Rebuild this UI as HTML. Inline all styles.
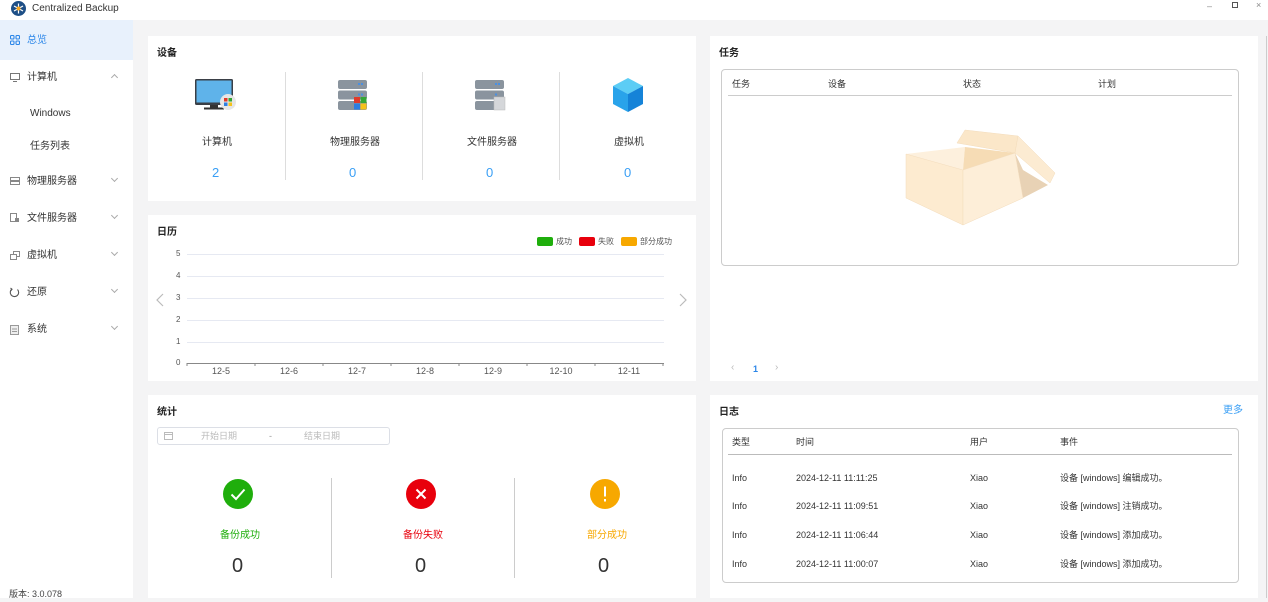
<!DOCTYPE html>
<html><head><meta charset="utf-8"><style>
*{margin:0;padding:0;box-sizing:border-box}
body{width:1268px;height:598px;overflow:hidden;background:#f4f4f5;font-family:"Liberation Sans","Noto Sans CJK SC",sans-serif;color:#333;position:relative;font-size:10px}
.a{position:absolute;white-space:nowrap;line-height:16px}
.card{position:absolute;background:#fff}
.t{font-weight:bold;font-size:10px;color:#222}
.side{position:absolute;left:0;top:20px;width:133px;height:578px;background:#fff}
.chev{position:absolute;left:112px;width:5px;height:5px;border-right:1px solid #aaa;border-bottom:1px solid #aaa}
.g{position:absolute;left:187px;width:477px;height:1px;background:#e6e9f2}
.yl{position:absolute;left:176px;font-size:8px;color:#555}
.xl{position:absolute;font-size:9px;color:#555;width:60px;text-align:center}
.vd{position:absolute;width:1px;background:#ddd}
</style></head><body>
<div class="a" style="left:0;top:0;width:1268px;height:20px;background:#fff"></div>
<svg class="a" style="left:11px;top:1px" width="15" height="15" viewBox="0 0 15 15"><circle cx="7.5" cy="7.5" r="7.5" fill="#1e4f86"/><g stroke="#fff" stroke-width="1.2"><line x1="7.5" y1="2.5" x2="7.5" y2="12.5"/><line x1="3" y1="5" x2="12" y2="10"/><line x1="3" y1="10" x2="12" y2="5"/></g><circle cx="7.5" cy="7.5" r="2" fill="#f5a623"/></svg>
<div class="a" style="left:32px;top:1px;font-size:10px;color:#333">Centralized Backup</div>
<div class="a" style="left:1207px;top:-2px;font-size:9px;color:#888">–</div>
<div class="a" style="left:1232px;top:2px;width:6px;height:6px;border:1px solid #555"></div>
<div class="a" style="left:1256px;top:-3px;font-size:9px;color:#888">×</div>
<div class="side"></div>
<div class="a" style="left:0;top:20px;width:133px;height:40px;background:#e8f1fc"></div>
<svg class="a" style="left:10px;top:35px" width="10" height="10" viewBox="0 0 10 10" fill="none" stroke="#2b86e8" stroke-width="1.1"><rect x=".5" y=".5" width="3.5" height="3.5" rx="1"/><rect x="6" y=".5" width="3.5" height="3.5" rx="1"/><rect x=".5" y="6" width="3.5" height="3.5" rx="1"/><rect x="6" y="6" width="3.5" height="3.5" rx="1"/></svg>
<div class="a" style="left:27px;top:33px;color:#2b86e8">总览</div>
<svg class="a" style="left:10px;top:73px" width="10" height="9" viewBox="0 0 10 9" fill="none" stroke="#777"><rect x=".5" y=".5" width="9" height="6"/><line x1="3" y1="8.5" x2="7" y2="8.5"/></svg>
<div class="a" style="left:27px;top:70px">计算机</div>
<div class="chev" style="top:75px;transform:rotate(-135deg)"></div>
<div class="a" style="left:30px;top:106px">Windows</div>
<div class="a" style="left:30px;top:139px">任务列表</div>
<svg class="a" style="left:10px;top:177px" width="10" height="8"><rect x=".5" y=".5" width="9" height="7" fill="none" stroke="#888"/><rect x="1" y="3" width="8" height="2" fill="#888"/></svg>
<div class="a" style="left:27px;top:174px">物理服务器</div>
<div class="chev" style="top:176px;transform:rotate(45deg)"></div>
<svg class="a" style="left:10px;top:213px" width="10" height="10"><rect x=".5" y=".5" width="6" height="8" fill="none" stroke="#888"/><rect x="5" y="5" width="4" height="4" fill="#888"/></svg>
<div class="a" style="left:27px;top:211px">文件服务器</div>
<div class="chev" style="top:213px;transform:rotate(45deg)"></div>
<svg class="a" style="left:10px;top:251px" width="10" height="9" fill="none" stroke="#888"><rect x="3.5" y=".5" width="6" height="5"/><rect x=".5" y="3.5" width="6" height="5" fill="#fff"/></svg>
<div class="a" style="left:27px;top:248px">虚拟机</div>
<div class="chev" style="top:250px;transform:rotate(45deg)"></div>
<svg class="a" style="left:9px;top:287px" width="11" height="11" fill="none" stroke="#555" stroke-width="1.1"><path d="M3 2 A4.2 4.2 0 1 0 8.5 2.5"/><path d="M1.5 1 L3 2.2 L1.8 3.8"/></svg>
<div class="a" style="left:27px;top:285px">还原</div>
<div class="chev" style="top:287px;transform:rotate(45deg)"></div>
<svg class="a" style="left:10px;top:325px" width="9" height="10"><rect x=".5" y=".5" width="8" height="9" fill="#eee" stroke="#999"/><line x1="2" y1="4" x2="7" y2="4" stroke="#999"/><line x1="2" y1="6.5" x2="7" y2="6.5" stroke="#999"/></svg>
<div class="a" style="left:27px;top:322px">系统</div>
<div class="chev" style="top:324px;transform:rotate(45deg)"></div>
<div class="a" style="left:9px;top:586px;font-size:9px;color:#444">版本: 3.0.078</div>
<div class="a" style="left:1266px;top:36px;width:1px;height:562px;background:#ccc"></div>

<div class="card" style="left:148px;top:36px;width:548px;height:165px"></div>
<div class="a t" style="left:157px;top:46px">设备</div>
<div class="vd" style="left:285px;top:72px;height:108px"></div>
<div class="vd" style="left:422px;top:72px;height:108px"></div>
<div class="vd" style="left:559px;top:72px;height:108px"></div>
<svg class="a" style="left:194px;top:78px" width="44" height="34" viewBox="0 0 44 34"><rect x="1" y="1" width="38" height="26" rx="1.5" fill="#3a3f46"/><rect x="2.5" y="2.5" width="35" height="22" fill="#5fb3ea"/><rect x="16" y="27" width="8" height="3" fill="#333"/><rect x="10" y="29.5" width="20" height="2" fill="#333"/><circle cx="34" cy="24" r="8" fill="#e6e6e6"/><rect x="30" y="20" width="3.5" height="3.5" fill="#e03a2a"/><rect x="34.5" y="20" width="3.5" height="3.5" fill="#35a635"/><rect x="30" y="24.5" width="3.5" height="3.5" fill="#2d7de0"/><rect x="34.5" y="24.5" width="3.5" height="3.5" fill="#f5c21b"/></svg>
<svg class="a" style="left:336px;top:78px" width="34" height="34" viewBox="0 0 34 34"><g fill="#8a949e"><rect x="2" y="2" width="29" height="9" rx="2"/><rect x="2" y="12.5" width="29" height="9" rx="2"/><rect x="2" y="23" width="29" height="9" rx="2"/></g><g fill="#4a90e2"><rect x="22" y="5" width="2" height="2"/><rect x="25" y="5" width="2" height="2"/><rect x="22" y="15.5" width="2" height="2"/><rect x="25" y="15.5" width="2" height="2"/></g><rect x="18" y="19" width="6" height="6" fill="#e03a2a"/><rect x="24.5" y="19" width="6" height="6" fill="#35a635"/><rect x="18" y="25.5" width="6" height="6" fill="#2d7de0"/><rect x="24.5" y="25.5" width="6" height="6" fill="#f5c21b"/></svg>
<svg class="a" style="left:473px;top:78px" width="34" height="34" viewBox="0 0 34 34"><g fill="#8a949e"><rect x="2" y="2" width="29" height="9" rx="2"/><rect x="2" y="12.5" width="29" height="9" rx="2"/><rect x="2" y="23" width="29" height="9" rx="2"/></g><g fill="#4a90e2"><rect x="22" y="5" width="2" height="2"/><rect x="25" y="5" width="2" height="2"/><rect x="22" y="15.5" width="2" height="2"/></g><rect x="21" y="19" width="11" height="13" fill="#d5d7da" stroke="#bbb" stroke-width=".5"/></svg>
<svg class="a" style="left:611px;top:77px" width="34" height="36" viewBox="0 0 34 36"><polygon points="17,1 32,9 17,17 2,9" fill="#5ccdf5"/><polygon points="2,9 17,17 17,35 2,27" fill="#29a3ea"/><polygon points="32,9 17,17 17,35 32,27" fill="#1583d8"/></svg>
<div class="a" style="left:202px;top:135px">计算机</div>
<div class="a" style="left:330px;top:135px">物理服务器</div>
<div class="a" style="left:467px;top:135px">文件服务器</div>
<div class="a" style="left:614px;top:135px">虚拟机</div>
<div class="a" style="left:212px;top:165px;font-size:13px;line-height:15px;color:#3a9ff5">2</div>
<div class="a" style="left:349px;top:165px;font-size:13px;line-height:15px;color:#3a9ff5">0</div>
<div class="a" style="left:486px;top:165px;font-size:13px;line-height:15px;color:#3a9ff5">0</div>
<div class="a" style="left:624px;top:165px;font-size:13px;line-height:15px;color:#3a9ff5">0</div>

<div class="card" style="left:148px;top:215px;width:548px;height:166px"></div>
<div class="a t" style="left:157px;top:225px">日历</div>
<div class="a" style="left:537px;top:237px;width:16px;height:9px;background:#1fae0c;border-radius:2px"></div>
<div class="a" style="left:556px;top:234px;font-size:8px;color:#555">成功</div>
<div class="a" style="left:579px;top:237px;width:16px;height:9px;background:#e8000c;border-radius:2px"></div>
<div class="a" style="left:598px;top:234px;font-size:8px;color:#555">失败</div>
<div class="a" style="left:621px;top:237px;width:16px;height:9px;background:#f7a800;border-radius:2px"></div>
<div class="a" style="left:640px;top:234px;font-size:8px;color:#555">部分成功</div>
<div class="g" style="top:254px"></div><div class="g" style="top:276px"></div><div class="g" style="top:298px"></div><div class="g" style="top:320px"></div><div class="g" style="top:342px"></div>
<div class="a" style="left:187px;top:363px;width:477px;height:1px;background:#888"></div>
<div class="yl" style="top:249px">5</div><div class="yl" style="top:271px">4</div><div class="yl" style="top:293px">3</div><div class="yl" style="top:315px">2</div><div class="yl" style="top:337px">1</div><div class="yl" style="top:358px">0</div>
<svg class="a" style="left:186px;top:363px" width="480" height="4"><g stroke="#888"><line x1="1" y1="0" x2="1" y2="3"/><line x1="69" y1="0" x2="69" y2="3"/><line x1="137" y1="0" x2="137" y2="3"/><line x1="205" y1="0" x2="205" y2="3"/><line x1="273" y1="0" x2="273" y2="3"/><line x1="341" y1="0" x2="341" y2="3"/><line x1="409" y1="0" x2="409" y2="3"/><line x1="477" y1="0" x2="477" y2="3"/></g></svg>
<div class="xl" style="left:191px;top:366px">12-5</div><div class="xl" style="left:259px;top:366px">12-6</div><div class="xl" style="left:327px;top:366px">12-7</div><div class="xl" style="left:395px;top:366px">12-8</div><div class="xl" style="left:463px;top:366px">12-9</div><div class="xl" style="left:531px;top:366px">12-10</div><div class="xl" style="left:599px;top:366px">12-11</div>
<svg class="a" style="left:156px;top:293px" width="8" height="14" fill="none" stroke="#bbb" stroke-width="1.2"><path d="M7 1 L1 7 L7 13"/></svg>
<svg class="a" style="left:679px;top:293px" width="8" height="14" fill="none" stroke="#bbb" stroke-width="1.2"><path d="M1 1 L7 7 L1 13"/></svg>

<div class="card" style="left:148px;top:395px;width:548px;height:203px"></div>
<div class="a t" style="left:157px;top:405px">统计</div>
<div class="a" style="left:157px;top:427px;width:233px;height:18px;border:1px solid #dcdfe6;border-radius:3px"></div>
<svg class="a" style="left:164px;top:431px" width="9" height="9" fill="none" stroke="#bbb"><rect x=".5" y="1.5" width="8" height="7"/><line x1=".5" y1="3.5" x2="8.5" y2="3.5"/></svg>
<div class="a" style="left:201px;top:428px;color:#bbb;font-size:9px">开始日期</div>
<div class="a" style="left:269px;top:428px;color:#999;font-size:9px">-</div>
<div class="a" style="left:304px;top:428px;color:#bbb;font-size:9px">结束日期</div>
<div class="vd" style="left:331px;top:478px;height:100px;background:#ccc"></div>
<div class="vd" style="left:514px;top:478px;height:100px;background:#ccc"></div>
<svg class="a" style="left:223px;top:479px" width="30" height="30"><circle cx="15" cy="15" r="15" fill="#1fae0c"/><path d="M8.5 15.5 L13 20 L21.5 10.5" fill="none" stroke="#fff" stroke-width="2"/></svg>
<svg class="a" style="left:406px;top:479px" width="30" height="30"><circle cx="15" cy="15" r="15" fill="#e8000c"/><path d="M10.5 10.5 L19.5 19.5 M19.5 10.5 L10.5 19.5" stroke="#fff" stroke-width="2"/></svg>
<svg class="a" style="left:590px;top:479px" width="30" height="30"><circle cx="15" cy="15" r="15" fill="#f7a800"/><rect x="14" y="7.5" width="2" height="10" fill="#fff"/><rect x="14" y="20" width="2" height="2.5" fill="#fff"/></svg>
<div class="a" style="left:220px;top:528px;color:#1fae0c">备份成功</div>
<div class="a" style="left:403px;top:528px;color:#e8000c">备份失败</div>
<div class="a" style="left:587px;top:528px;color:#f7a800">部分成功</div>
<div class="a" style="left:232px;top:555px;font-size:20px;line-height:23px;color:#333">0</div>
<div class="a" style="left:415px;top:555px;font-size:20px;line-height:23px;color:#333">0</div>
<div class="a" style="left:598px;top:555px;font-size:20px;line-height:23px;color:#333">0</div>

<div class="card" style="left:710px;top:36px;width:548px;height:345px"></div>
<div class="a t" style="left:719px;top:46px">任务</div>
<div class="a" style="left:721px;top:69px;width:518px;height:197px;border:1px solid #ccc;border-radius:4px"></div>
<div class="a" style="left:732px;top:76px;font-size:9px">任务</div>
<div class="a" style="left:828px;top:76px;font-size:9px">设备</div>
<div class="a" style="left:963px;top:76px;font-size:9px">状态</div>
<div class="a" style="left:1098px;top:76px;font-size:9px">计划</div>
<div class="a" style="left:728px;top:95px;width:504px;height:1px;background:#ccc"></div>
<svg class="a" style="left:900px;top:125px" width="160" height="105" viewBox="900 125 160 105"><polygon points="957,143 965,130 1018,136 1015,153" fill="#fbe7c9" stroke="#f3dcbc" stroke-width=".5"/><polygon points="906,154 965,147 963,170" fill="#fdf0dd"/><polygon points="965,147 1015,153 963,170" fill="#f6dcb5"/><polygon points="1015,153 1023,170 1048,185 1023,198" fill="#e8d2b5"/><polygon points="1018,136 1055,173 1050,183 1015,153" fill="#fcebd2" stroke="#f3dcbc" stroke-width=".5"/><polygon points="906,154 963,170 963,225 906,198" fill="#fdebd0" stroke="#f3dcbc" stroke-width=".5"/><polygon points="963,170 1015,153 1023,198 963,225" fill="#fdeed8" stroke="#f3dcbc" stroke-width=".5"/></svg>
<div class="a" style="left:731px;top:360px;color:#bbb;font-size:10px">‹</div>
<div class="a" style="left:753px;top:361px;color:#2b86e8;font-size:9px;font-weight:bold">1</div>
<div class="a" style="left:775px;top:360px;color:#bbb;font-size:10px">›</div>

<div class="card" style="left:710px;top:395px;width:548px;height:203px"></div>
<div class="a t" style="left:719px;top:405px">日志</div>
<div class="a" style="left:1223px;top:403px;color:#3a9ff5">更多</div>
<div class="a" style="left:722px;top:428px;width:517px;height:155px;border:1px solid #ccc;border-radius:4px"></div>
<div class="a" style="left:732px;top:434px;font-size:9px">类型</div>
<div class="a" style="left:796px;top:434px;font-size:9px">时间</div>
<div class="a" style="left:970px;top:434px;font-size:9px">用户</div>
<div class="a" style="left:1060px;top:434px;font-size:9px">事件</div>
<div class="a" style="left:728px;top:454px;width:504px;height:1px;background:#bbb"></div>
<div class="a" style="left:732px;top:470px;font-size:9px">Info</div><div class="a" style="left:796px;top:470px;font-size:9px">2024-12-11 11:11:25</div><div class="a" style="left:970px;top:470px;font-size:9px">Xiao</div><div class="a" style="left:1060px;top:470px;font-size:9px">设备 [windows] 编辑成功。</div>
<div class="a" style="left:732px;top:498px;font-size:9px">Info</div><div class="a" style="left:796px;top:498px;font-size:9px">2024-12-11 11:09:51</div><div class="a" style="left:970px;top:498px;font-size:9px">Xiao</div><div class="a" style="left:1060px;top:498px;font-size:9px">设备 [windows] 注销成功。</div>
<div class="a" style="left:732px;top:527px;font-size:9px">Info</div><div class="a" style="left:796px;top:527px;font-size:9px">2024-12-11 11:06:44</div><div class="a" style="left:970px;top:527px;font-size:9px">Xiao</div><div class="a" style="left:1060px;top:527px;font-size:9px">设备 [windows] 添加成功。</div>
<div class="a" style="left:732px;top:556px;font-size:9px">Info</div><div class="a" style="left:796px;top:556px;font-size:9px">2024-12-11 11:00:07</div><div class="a" style="left:970px;top:556px;font-size:9px">Xiao</div><div class="a" style="left:1060px;top:556px;font-size:9px">设备 [windows] 添加成功。</div>
</body></html>
